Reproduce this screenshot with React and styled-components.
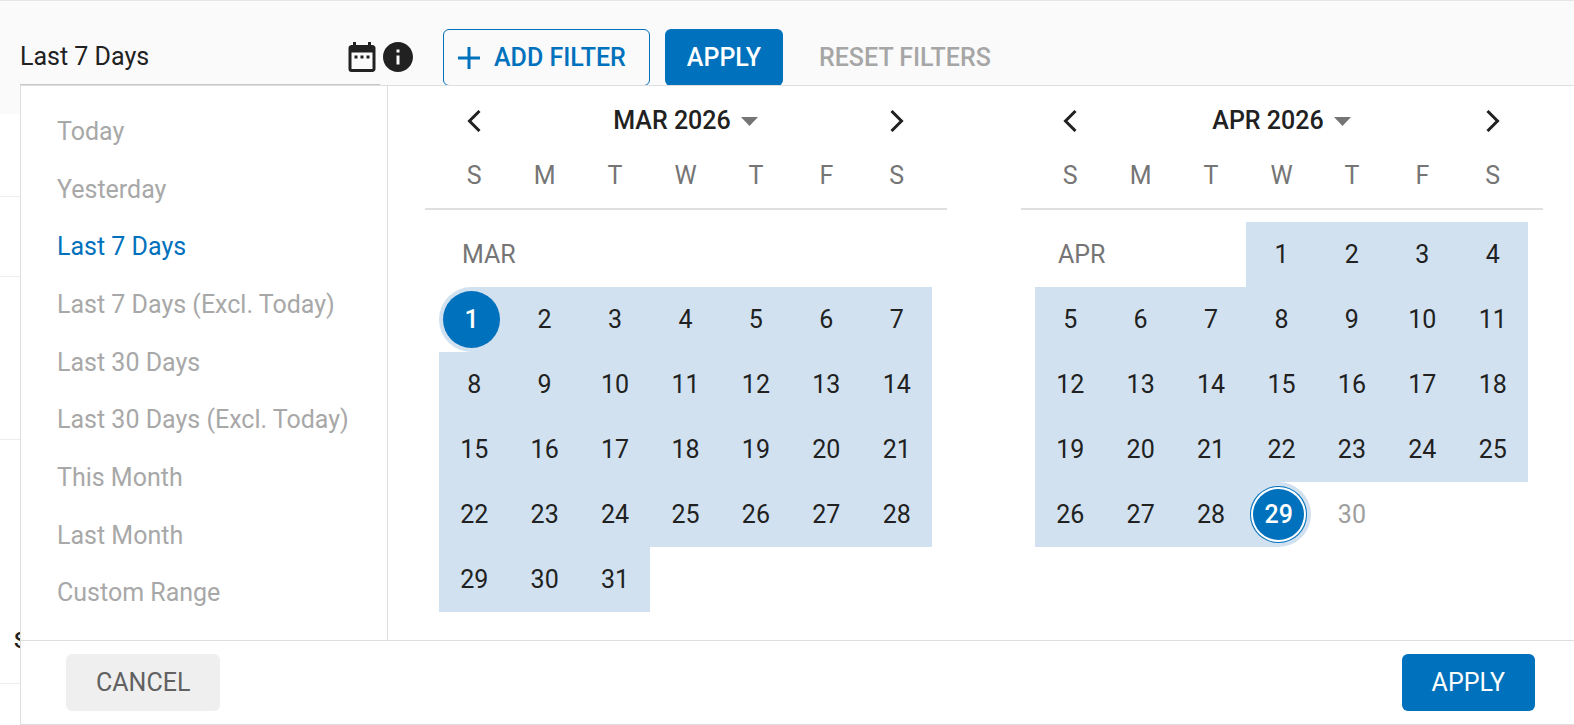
import React, { useState } from "react";
import styled, { createGlobalStyle, css } from "styled-components";
import { MdDateRange, MdInfo } from "react-icons/md";

const BLUE = "#0071bc";
const RANGE = "#d2e1f0";

const GlobalStyle = createGlobalStyle`
  *, *::before, *::after {
    box-sizing: border-box;
  }
  body {
    margin: 0;
    background: #fff;
    color: #212121;
    font-family: Roboto, "Liberation Sans", sans-serif;
    font-size: 25px;
    line-height: 30px;
  }
  button, input {
    font: inherit;
    color: inherit;
  }
  button {
    padding: 0;
    border: none;
    background: none;
    cursor: pointer;
  }
`;

const Page = styled.main`
  position: relative;
`;

const Toolbar = styled.header`
  display: flex;
  align-items: flex-start;
  height: 114px;
  padding: 28px 20px 0;
  border-top: 1px solid #e6e6e6;
  background: #fafafa;
`;

const DateField = styled.label`
  display: flex;
  align-items: center;
  width: 360px;
  height: 57px;
  border-bottom: 2px solid #c8c8c8;
`;

const DateInput = styled.input`
  flex: 1;
  min-width: 0;
  height: 30px;
  padding: 0;
  border: none;
  outline: none;
  background: none;
`;

const InfoButton = styled.button`
  display: flex;
  align-items: center;
  height: 55px;
  margin-right: 27px;
`;

const Button = styled.button`
  display: flex;
  align-items: center;
  justify-content: center;
  gap: 14px;
  height: 57px;
  padding: 0 22px;
  border-radius: 6px;
  font-weight: 500;

  ${(p) =>
    p.$variant === "primary" &&
    css`
      background: ${BLUE};
      color: #fff;
    `}
  ${(p) =>
    p.$variant === "outline" &&
    css`
      margin-right: 15px;
      padding: 0 23px 0 14px;
      border: 1px solid ${BLUE};
      color: ${BLUE};
    `}
  ${(p) =>
    p.$variant === "muted" &&
    css`
      background: #efefef;
      color: #616161;
    `}
  ${(p) =>
    p.$variant === "text" &&
    css`
      padding: 0 36px;
      color: #a6a6a6;
    `}
`;

const BackRow = styled.section`
  height: ${(p) => p.$height}px;
  padding: 0 14px;
  border-bottom: 1px solid #ececec;
  display: flex;
  align-items: flex-end;
  font-size: 22px;
  font-weight: 500;

  &:last-of-type {
    border-bottom: none;
  }
`;

const BackTitle = styled.h2`
  margin: 0 0 27px;
  font: inherit;
`;

const Panel = styled.div`
  position: absolute;
  top: 85px;
  left: 20px;
  right: 0;
  background: #fff;
  border: 1px solid #dedede;
  border-right: none;
`;

const PanelBody = styled.div`
  display: flex;
`;

const Presets = styled.ul`
  display: flex;
  flex-direction: column;
  width: 367px;
  margin: 0;
  padding: 17px 0 18px;
  list-style: none;
  border-right: 1px solid #dedede;
`;

const PresetItem = styled.li`
  flex: 1;
  display: flex;
`;

const PresetButton = styled.button`
  flex: 1;
  padding: 0 36px;
  text-align: left;
  white-space: nowrap;
  color: ${(p) => (p.$active ? BLUE : "#a8a8a8")};
`;

const Calendars = styled.div`
  flex: 1;
  display: grid;
  grid-template-columns: 1fr 1fr;
  gap: 74px;
  padding: 0 31px 28px 37px;
`;

const CalendarHeader = styled.div`
  display: grid;
  grid-template-columns: 1fr 5fr 1fr;
  height: 70px;
  padding: 0 15px 0 14px;
`;

const HeaderButton = styled.button`
  display: flex;
  align-items: center;
  justify-content: center;
  gap: 10px;
  font-weight: 500;
`;

const Weekdays = styled.thead`
  th {
    height: 40px;
    padding: 0;
    font-weight: 400;
    color: #757575;
  }
`;

const MonthTable = styled.table`
  width: 100%;
  table-layout: fixed;
  border-collapse: collapse;
`;

const TableInset = styled.div`
  padding: 0 15px 0 14px;
`;

const Rule = styled.hr`
  margin: 12px 0;
  border: none;
  border-top: 2px solid #e0e0e0;
`;

const MonthLabel = styled.td`
  height: 65px;
  padding: 0 0 0 23px;
  color: #757575;
`;

const DayCell = styled.td`
  height: 65px;
  padding: 0;
  background: ${(p) => (p.$kind === "range" ? RANGE : "none")};
`;

const DayHolder = styled.div`
  display: flex;
  align-items: center;
  height: 65px;
  ${(p) =>
    p.$kind === "start" &&
    css`
      padding-left: 4px;
      border-radius: 33px 0 0 33px;
      background: ${RANGE};
    `}
  ${(p) =>
    p.$kind === "end" &&
    css`
      width: 65px;
      padding-left: 4px;
      border-radius: 0 33px 33px 0;
      background: ${RANGE};
    `}
`;

const DayButton = styled.button`
  flex: 1;
  height: 57px;
  color: ${(p) => (p.disabled ? "#9e9e9e" : "#212121")};
  ${(p) =>
    (p.$kind === "start" || p.$kind === "end") &&
    css`
      flex: none;
      width: 57px;
      border-radius: 50%;
      background: ${BLUE};
      color: #fff;
      font-weight: 500;
    `}
  ${(p) =>
    p.$kind === "end" &&
    css`
      box-shadow: inset 0 0 0 1px ${BLUE}, inset 0 0 0 3px #fff;
    `}
`;

const PanelFooter = styled.footer`
  display: flex;
  justify-content: space-between;
  padding: 13px 39px 13px 45px;
  border-top: 1px solid #dedede;
`;

const FooterButton = styled(Button)`
  padding: 0 30px;
  font-weight: 400;
`;

const presets = [
  "Today",
  "Yesterday",
  "Last 7 Days",
  "Last 7 Days (Excl. Today)",
  "Last 30 Days",
  "Last 30 Days (Excl. Today)",
  "This Month",
  "Last Month",
  "Custom Range",
];

const weekdays = ["S", "M", "T", "W", "T", "F", "S"];

const PlusIcon = () => (
  <svg width="22" height="22" viewBox="0 0 22 22" aria-hidden="true">
    <path d="M11 0v22M0 11h22" stroke="currentColor" strokeWidth="3" fill="none" />
  </svg>
);

const Chevron = ({ next }) => (
  <svg width="14" height="22" viewBox="0 0 14 22" aria-hidden="true">
    <path
      d={next ? "M1.5 1l10 10-10 10" : "M12.5 1l-10 10 10 10"}
      stroke="#212121"
      strokeWidth="3"
      fill="none"
    />
  </svg>
);

const Caret = () => (
  <svg width="17" height="9" viewBox="0 0 17 9" aria-hidden="true">
    <path d="M0 0h17L8.5 9z" fill="#757575" />
  </svg>
);

// Splits a month into week rows, with null for the empty cells
const buildWeeks = (firstWeekday, length) => {
  const cells = Array(firstWeekday).fill(null);
  for (let day = 1; day <= length; day++) cells.push(day);
  while (cells.length % 7) cells.push(null);
  const weeks = [];
  for (let i = 0; i < cells.length; i += 7) weeks.push(cells.slice(i, i + 7));
  return weeks;
};

const Month = ({ label, year, firstWeekday, length, start, end }) => {
  const weeks = buildWeeks(firstWeekday, length);

  const kindOf = (day) => {
    if (!day) return "empty";
    if (day === start) return "start";
    if (day === end) return "end";
    return end && day > end ? "off" : "range";
  };

  const renderDay = (day, i) => (
    <DayCell key={i} $kind={kindOf(day)}>
      {day && (
        <DayHolder $kind={kindOf(day)}>
          <DayButton type="button" $kind={kindOf(day)} disabled={kindOf(day) === "off"}>
            {day}
          </DayButton>
        </DayHolder>
      )}
    </DayCell>
  );

  return (
    <section aria-label={`${label} ${year}`}>
      <CalendarHeader>
        <HeaderButton type="button" aria-label="Previous month">
          <Chevron />
        </HeaderButton>
        <HeaderButton type="button">
          {label} {year}
          <Caret />
        </HeaderButton>
        <HeaderButton type="button" aria-label="Next month">
          <Chevron next />
        </HeaderButton>
      </CalendarHeader>
      <TableInset>
        <MonthTable>
          <Weekdays>
            <tr>
              {weekdays.map((d, i) => (
                <th key={i} scope="col">
                  {d}
                </th>
              ))}
            </tr>
          </Weekdays>
        </MonthTable>
      </TableInset>
      <Rule />
      <TableInset>
        <MonthTable>
          <tbody>
            {firstWeekday === 0 && (
              <tr>
                <MonthLabel colSpan={7}>{label}</MonthLabel>
              </tr>
            )}
            {weeks.map((week, w) => (
              <tr key={w}>
                {w === 0 && firstWeekday > 0 && (
                  <MonthLabel colSpan={firstWeekday}>{label}</MonthLabel>
                )}
                {(w === 0 ? week.slice(firstWeekday) : week).map(renderDay)}
              </tr>
            ))}
          </tbody>
        </MonthTable>
      </TableInset>
    </section>
  );
};

const App = () => {
  const [preset, setPreset] = useState("Last 7 Days");

  return (
    <Page>
      <GlobalStyle />
      <Toolbar>
        <DateField>
          <DateInput type="text" aria-label="Date range" value={preset} readOnly />
          <MdDateRange size={36} />
        </DateField>
        <InfoButton type="button" aria-label="About date ranges">
          <MdInfo size={36} />
        </InfoButton>
        <Button type="button" $variant="outline">
          <PlusIcon />
          ADD FILTER
        </Button>
        <Button type="button" $variant="primary">
          APPLY
        </Button>
        <Button type="button" $variant="text">
          RESET FILTERS
        </Button>
      </Toolbar>
      <BackRow $height={83} />
      <BackRow $height={80} />
      <BackRow $height={163} />
      <BackRow $height={244}>
        <BackTitle>S</BackTitle>
      </BackRow>
      <BackRow $height={41} />

      <Panel role="dialog" aria-label="Select date range">
        <PanelBody>
          <Presets>
            {presets.map((name) => (
              <PresetItem key={name}>
                <PresetButton
                  type="button"
                  $active={name === preset}
                  onClick={() => setPreset(name)}
                >
                  {name}
                </PresetButton>
              </PresetItem>
            ))}
          </Presets>
          <Calendars>
            <Month label="MAR" year={2026} firstWeekday={0} length={31} start={1} />
            <Month label="APR" year={2026} firstWeekday={3} length={30} end={29} />
          </Calendars>
        </PanelBody>
        <PanelFooter>
          <FooterButton type="button" $variant="muted">
            CANCEL
          </FooterButton>
          <FooterButton type="button" $variant="primary">
            APPLY
          </FooterButton>
        </PanelFooter>
      </Panel>
    </Page>
  );
};

export default App;
